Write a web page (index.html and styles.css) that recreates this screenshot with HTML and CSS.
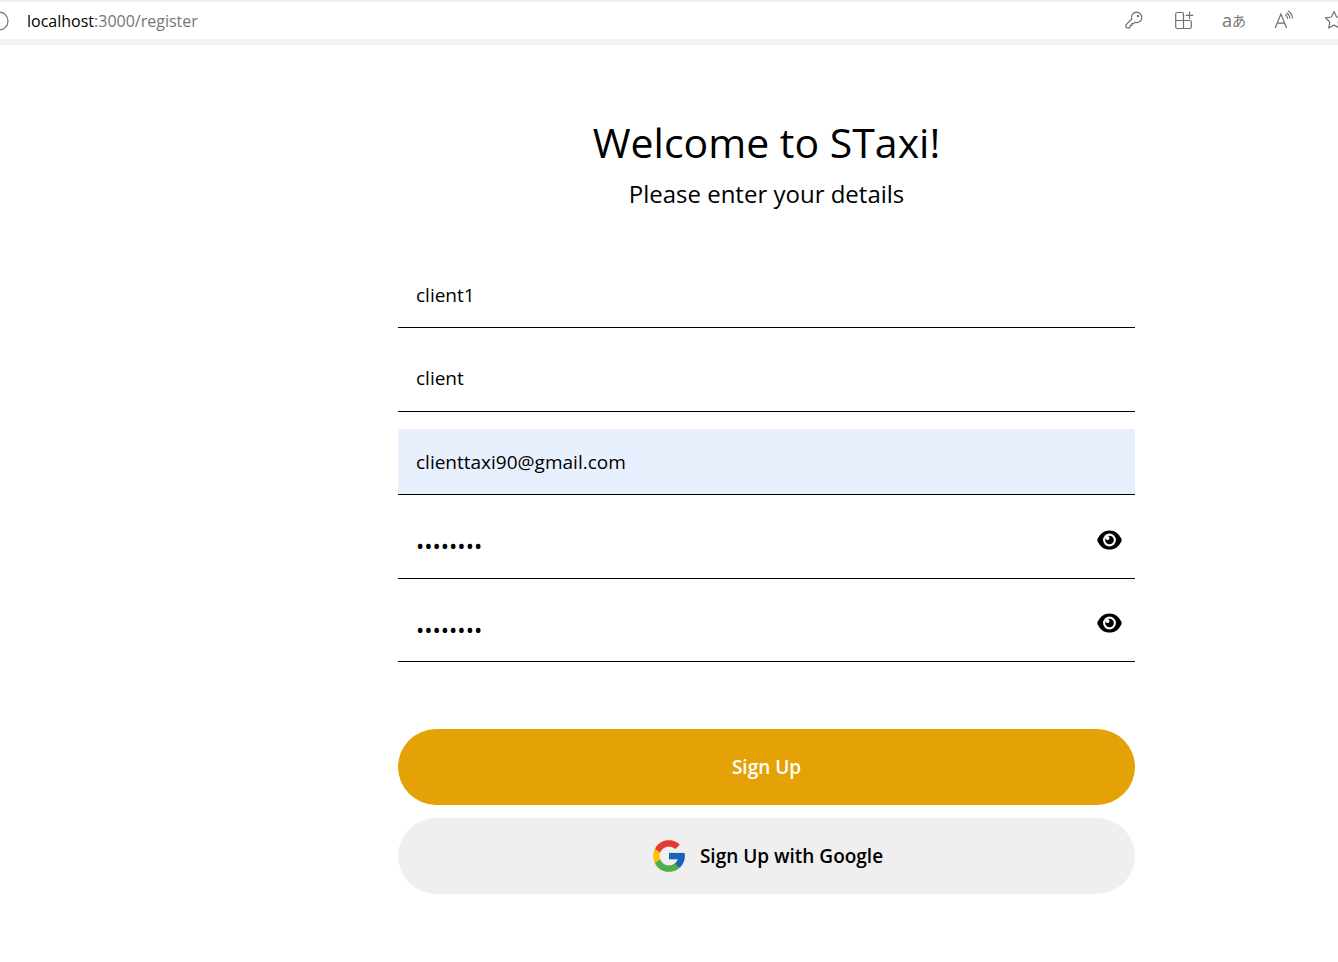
FILE: index.html
```html
<!DOCTYPE html>
<html lang="en">
<head>
<meta charset="utf-8">
<title>STaxi - Register</title>
<link rel="stylesheet" href="styles.css">
</head>
<body>
<header class="toolbar">
  <button class="site-info" type="button" aria-label="Site information">
    <svg width="20" height="20" viewBox="0 0 20 20"><circle cx="10" cy="10" r="9"/></svg>
  </button>
  <p class="address"><span class="host">localhost</span>:3000/register</p>
  <nav class="tools">
    <button class="tool" type="button" aria-label="Passwords">
      <svg width="20" height="20" viewBox="0 0 20 20"><path d="M12.6 2.2a5.2 5.2 0 0 1 0 10.4c-.6 0-1.1-.1-1.6-.3l-1.4 1.4H7.9v1.7H6.2v1.5l-1 1H2.9c-.6 0-1-.4-1-1v-2l5.8-5.9a5.2 5.2 0 0 1 4.9-6.8z"/><circle cx="14" cy="6" r=".6"/></svg>
    </button>
    <button class="tool" type="button" aria-label="Apps">
      <svg width="20" height="20" viewBox="0 0 20 20"><path d="M9.5 18.5V4c0-.8-.5-1.500-1.500-1.500H3.200c-.8 0-1.500.7-1.500 1.500v13c0 .8.7 1.500 1.500 1.500h12.600c.8 0 1.500-.7 1.500-1.500v-5c0-.8-.7-1.500-1.500-1.500H1.700M15.500 1.500v7.500M11.700 5.300h7.500"/></svg>
    </button>
    <button class="tool translate" type="button" aria-label="Translate"><span class="latin">a</span><span class="kana">あ</span></button>
    <button class="tool" type="button" aria-label="Read aloud">
      <svg width="20" height="20" viewBox="0 0 20 20"><path d="M1.200 18 6.900 4l5.700 14M3 13.200h7.800M11.200 4.500c1.500 1 2.300 2.400 2.400 4.200M12.500 2.700c2 1.300 3.200 3.300 3.300 5.900M14 1c2.800 1.700 4.300 4.300 4.500 7.500"/></svg>
    </button>
    <button class="tool" type="button" aria-label="Add to favorites">
      <svg width="20" height="20" viewBox="0 0 20 20"><path stroke-linejoin="round" d="m10 1.500 2.600 5.500 6 .8-4.400 4.200 1.100 6-5.300-2.900L4.700 18l1.100-6L1.400 7.800l6-.8z"/></svg>
    </button>
  </nav>
</header>
<main class="page">
  <h1 class="title">Welcome to STaxi!</h1>
  <p class="subtitle">Please enter your details</p>
  <form class="form">
    <div class="fields">
      <input class="field" type="text" aria-label="First name" value="client1">
      <input class="field" type="text" aria-label="Last name" value="client">
      <input class="field filled" type="email" aria-label="Email" value="clienttaxi90@gmail.com">
      <div class="secret">
        <input class="field password" type="password" aria-label="Password" value="password">
        <button class="reveal" type="button" aria-label="Show password">
          <svg width="25" height="20" viewBox="0 0 26 20"><path d="M13 0C7.500 0 3 3.500.6 8.800a3 3 0 0 0 0 2.400C3 16.500 7.500 20 13 20s10-3.500 12.400-8.800a3 3 0 0 0 0-2.400C23 3.500 18.500 0 13 0z"/><circle class="white" cx="13" cy="10" r="6.700"/><circle cx="13" cy="10" r="4.500"/><circle class="white" cx="10.900" cy="7.900" r="2.100"/></svg>
        </button>
      </div>
      <div class="secret">
        <input class="field password" type="password" aria-label="Confirm password" value="password">
        <button class="reveal" type="button" aria-label="Show confirmed password">
          <svg width="25" height="20" viewBox="0 0 26 20"><path d="M13 0C7.500 0 3 3.500.6 8.800a3 3 0 0 0 0 2.400C3 16.500 7.500 20 13 20s10-3.500 12.400-8.800a3 3 0 0 0 0-2.400C23 3.500 18.500 0 13 0z"/><circle class="white" cx="13" cy="10" r="6.700"/><circle cx="13" cy="10" r="4.500"/><circle class="white" cx="10.900" cy="7.900" r="2.100"/></svg>
        </button>
      </div>
    </div>
    <div class="actions">
      <button class="action primary" type="submit">Sign Up</button>
      <button class="action google" type="button">
        <svg width="38" height="38" viewBox="0 0 48 48"><path fill="#FFC107" d="M43.611 20.083H42V20H24v8h11.303C33.654 32.657 29.223 36 24 36c-6.627 0-12-5.373-12-12s5.373-12 12-12c3.059 0 5.842 1.154 7.961 3.039l5.657-5.657C34.046 6.053 29.268 4 24 4 12.955 4 4 12.955 4 24s8.955 20 20 20 20-8.955 20-20c0-1.341-.138-2.650-.389-3.917z"/><path fill="#E53935" d="m6.306 14.691 6.571 4.819C14.655 15.108 18.961 12 24 12c3.059 0 5.842 1.154 7.961 3.039l5.657-5.657C34.046 6.053 29.268 4 24 4 16.318 4 9.656 8.337 6.306 14.691z"/><path fill="#4CAF50" d="M24 44c5.166 0 9.860-1.977 13.409-5.192l-6.190-5.238C29.211 35.091 26.715 36 24 36c-5.202 0-9.619-3.317-11.283-7.946l-6.522 5.025C9.505 39.556 16.227 44 24 44z"/><path fill="#1565C0" d="M43.611 20.083H24v8h11.303a12.040 12.040 0 0 1-4.087 5.571l6.193 5.238C36.971 39.205 44 34 44 24c0-1.341-.138-2.650-.389-3.917z"/></svg>
        <span>Sign Up with Google</span>
      </button>
    </div>
  </form>
</main>
</body>
</html>
```
FILE: styles.css
```css
* { box-sizing: border-box; }
body {
  margin: 0;
  background: #fff;
  color: #000;
  font-family: "Open Sans", "Noto Sans", sans-serif;
}
button, input { font: inherit; color: inherit; }
button { border: 0; padding: 0; background: none; cursor: pointer; }
svg { display: block; }

.toolbar {
  display: flex;
  align-items: center;
  height: 45px;
  overflow: hidden;
  border-top: 2px solid #f0f0f0;
  border-bottom: 6px solid #f4f4f4;
  color: #767676;
}
.toolbar svg { fill: none; stroke: #707070; stroke-width: 1.2; }
.site-info { margin-left: -11px; }
.address { margin: 0 0 0 18px; font-size: 16px; line-height: 24px; }
.host { color: #000; }
.tools { display: flex; margin: 0 -21px 0 auto; }
.tool { display: flex; align-items: center; justify-content: center; width: 50px; height: 39px; padding-bottom: 2px; }
.translate { font-size: 18px; }
.kana { font-family: "Noto Sans CJK JP", sans-serif; font-size: 14px; }

.page { padding: 67px 203px 67px 398px; }
.title { margin: 0; font-size: 41px; font-weight: 400; line-height: 60px; text-align: center; }
.subtitle { margin: 4px 0 0; font-size: 24px; line-height: 36px; text-align: center; }
.fields {
  display: grid;
  align-content: space-between;
  min-height: 400px;
  margin-top: 50px;
}
.field {
  display: block;
  width: 100%;
  height: 66px;
  padding: 0 18px;
  border: 0;
  border-bottom: 1px solid #000;
  border-radius: 0;
  outline: 0;
  background: transparent;
  font-size: 19px;
}
.filled { background: #e8f0fe; }
.password { font-size: 22px; }
.secret { position: relative; }
.reveal { position: absolute; top: 17px; right: 13px; }
.white { fill: #fff; }

.actions { display: grid; gap: 13px; margin-top: 67px; }
.action {
  display: flex;
  align-items: center;
  justify-content: center;
  gap: 12px;
  height: 76px;
  border-radius: 38px;
  font-size: 19px;
  font-weight: 600;
}
.primary { background: #e5a207; color: #fff; }
.google { background: #efefef; }
```
